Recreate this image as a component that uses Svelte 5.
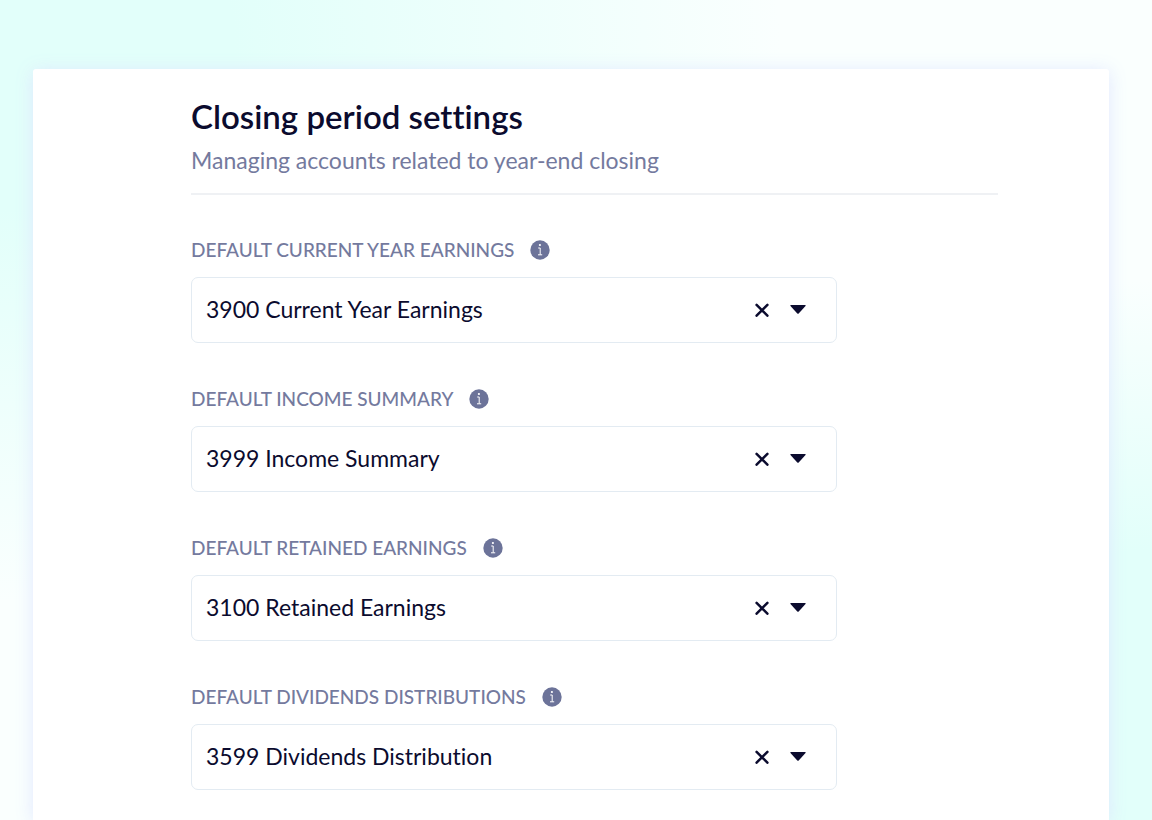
<script lang="ts">
  interface Field {
    id: string;
    label: string;
    value: string;
  }

  let fields: Field[] = $state([
    { id: 'current-year', label: 'Default current year earnings', value: '3900 Current Year Earnings' },
    { id: 'income-summary', label: 'Default income summary', value: '3999 Income Summary' },
    { id: 'retained', label: 'Default retained earnings', value: '3100 Retained Earnings' },
    { id: 'dividends', label: 'Default dividends distributions', value: '3599 Dividends Distribution' }
  ]);

  const accounts = fields.map((f) => f.value);
</script>

<main class="page">
  <section class="card">
    <header>
      <h1>Closing period settings</h1>
      <p>Managing accounts related to year-end closing</p>
    </header>

    <form>
      {#each fields as field (field.id)}
        <div class="field">
          <div class="label-row">
            <label for={field.id}>{field.label}</label>
            <svg class="info" viewBox="0 0 20 20" aria-hidden="true">
              <circle cx="10" cy="10" r="9.7" fill="#6c7399" />
              <circle cx="9.9" cy="5" r="1.1" fill="#fff" />
              <path d="M8.2 8h2v6.6M8 14.8h4.2" fill="none" stroke="#fff" stroke-width="1" />
            </svg>
          </div>
          <div class="control">
            <select id={field.id} bind:value={field.value}>
              {#each accounts as account}
                <option value={account}>{account}</option>
              {/each}
            </select>
            <div class="icons">
              <button type="button" aria-label="Clear" onclick={() => (field.value = '')}>
                <svg viewBox="0 0 14 14" width="14" height="14" aria-hidden="true">
                  <path d="M1.6 1.9l10.8 10.8M12.4 1.9L1.6 12.7" stroke="#0b0b2e" stroke-width="2.5" stroke-linecap="round" />
                </svg>
              </button>
              <svg class="caret" viewBox="0 0 16 10" width="16" height="10" aria-hidden="true">
                <path d="M.8 0h14.4q.8.2.3.9L8.7 8.5q-.7.7-1.4 0L.5.9Q0 .2.8 0z" fill="#0b0b2e" />
              </svg>
            </div>
          </div>
        </div>
      {/each}
    </form>
  </section>
</main>

<style>
  :global(body) {
    margin: 0;
  }

  .page {
    box-sizing: border-box;
    min-height: 100vh;
    padding: 69px 43px 0 33px;
    display: flex;
    font-family: Lato, 'Liberation Sans', sans-serif;
    font-variant-ligatures: none;
    color: #0b0b2e;
    background:
      radial-gradient(ellipse 780px 560px at 0 5%, #e2fffa 30%, rgba(226, 255, 250, 0) 100%),
      radial-gradient(ellipse 400px 540px at 100% 100%, #e2fffa 50%, rgba(226, 255, 250, 0) 100%),
      #fafffe;
  }

  .card {
    box-sizing: border-box;
    flex: 1;
    min-width: 0;
    padding: 26px 111px 30px 158px;
    background: #fff;
    border-radius: 3px 3px 0 0;
    box-shadow: 0 2px 18px rgba(222, 228, 255, 0.9);
  }

  header {
    padding-bottom: 18px;
    border-bottom: 2px solid #eff1f4;
  }

  h1 {
    margin: 0;
    font-size: 33px;
    line-height: 42px;
    font-weight: 600;
  }

  p {
    margin: 8px 0 0;
    font-size: 23px;
    line-height: 30px;
    color: #747a9e;
  }

  form {
    display: flex;
    flex-direction: column;
    gap: 44px;
    padding-top: 43px;
  }

  .field {
    width: 80%;
  }

  .label-row {
    display: flex;
    align-items: center;
    gap: 16px;
    height: 24px;
    margin-bottom: 15px;
  }

  label {
    font-size: 19px;
    line-height: 24px;
    font-weight: 500;
    text-transform: uppercase;
    color: #747a9e;
  }

  .info {
    width: 20px;
    height: 20px;
  }

  .control {
    position: relative;
  }

  select {
    box-sizing: border-box;
    display: block;
    width: 100%;
    height: 66px;
    padding: 0 96px 2px 14px;
    appearance: none;
    border: 1px solid #e3ebf2;
    border-radius: 7px;
    background: #fff;
    color: inherit;
    font-family: inherit;
    font-variant-ligatures: inherit;
    font-size: 23px;
  }

  select:focus-visible {
    outline: 2px solid #747a9e;
  }

  .icons {
    position: absolute;
    inset: 0 31px 0 auto;
    display: flex;
    align-items: center;
    gap: 21px;
    pointer-events: none;
  }

  button {
    display: flex;
    padding: 0;
    border: 0;
    background: none;
    cursor: pointer;
    pointer-events: auto;
  }
</style>
